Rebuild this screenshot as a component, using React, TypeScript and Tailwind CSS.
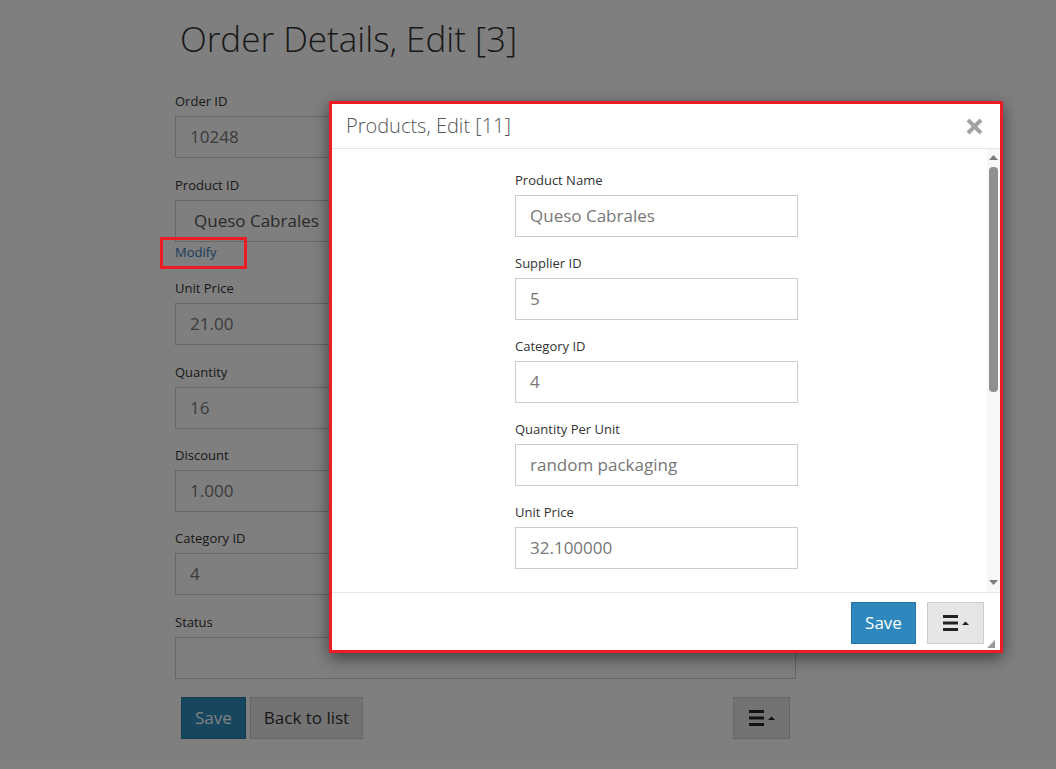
import React from "react";

const font = { fontFamily: '"Open Sans", "Liberation Sans", sans-serif' };

const MenuIcon = () => (
  <svg width="26" height="18" viewBox="0 0 26 18">
    <rect x="0" y="1" width="15" height="3" fill="#222" />
    <rect x="0" y="7.5" width="15" height="3" fill="#222" />
    <rect x="0" y="14" width="15" height="3" fill="#222" />
    <polygon points="19,11 26,11 22.5,7.5" fill="#222" />
  </svg>
);

const CloseIcon = () => (
  <svg width="17" height="17" viewBox="0 0 17 17">
    <line x1="2" y1="2" x2="15" y2="15" stroke="#a3a3a3" strokeWidth="4" />
    <line x1="15" y1="2" x2="2" y2="15" stroke="#a3a3a3" strokeWidth="4" />
  </svg>
);

type FieldProps = { label: string; value: string; gap?: string };

const Field = ({ label, value, gap = "mb-[17px]" }: FieldProps) => (
  <div className={gap}>
    <div className="text-[13px] leading-[20px] text-[#333] mb-[5px]">{label}</div>
    <div className="h-[42px] border border-[#ccc] bg-white px-[14px] flex items-center text-[17px] text-[#777]">
      {value}
    </div>
  </div>
);

const MenuButton = () => (
  <button className="w-[57px] h-[42px] bg-[#e6e6e6] border border-[#ccc] flex items-center justify-center">
    <MenuIcon />
  </button>
);

const OrderPage = () => (
  <div className="pl-[175px] w-[796px] pt-[19px]">
    <h1 className="pl-[5px] text-[35px] leading-[40px] font-light text-[#333] mb-[32px]">Order Details, Edit [3]</h1>

    <Field label="Order ID" value="10248" />

    <div>
      <div className="text-[13px] leading-[20px] text-[#333] mb-[5px]">Product ID</div>
      <div className="h-[42px] border border-[#ccc] bg-white px-[18px] flex items-center text-[17px] text-[#555]">
        Queso Cabrales
      </div>
      <a className="block text-[13px] leading-[20px] text-[#337ab7] mb-[16px]">Modify</a>
    </div>

    <Field label="Unit Price" value="21.00" />
    <Field label="Quantity" value="16" gap="mb-[16px]" />
    <Field label="Discount" value="1.000" gap="mb-[16px]" />
    <Field label="Category ID" value="4" />
    <Field label="Status" value="" gap="mb-[18px]" />

    <div className="flex items-center justify-between px-[6px]">
      <div className="flex gap-[4px]">
        <button className="h-[42px] px-[13px] bg-[#2e8cbe] border border-[#2a76a3] text-white text-[17px]">Save</button>
        <button className="h-[42px] px-[13px] bg-[#e6e6e6] border border-[#ccc] text-[#333] text-[17px]">Back to list</button>
      </div>
      <MenuButton />
    </div>
  </div>
);

const productFields = [
  { label: "Product Name", value: "Queso Cabrales" },
  { label: "Supplier ID", value: "5" },
  { label: "Category ID", value: "4" },
  { label: "Quantity Per Unit", value: "random packaging" },
  { label: "Unit Price", value: "32.100000" },
];

const ProductModal = () => (
  <div className="absolute left-[329px] top-[101px] w-[674px] h-[552px] border-[3px] border-[#ed1c24] bg-white flex flex-col shadow-[0_5px_15px_rgba(0,0,0,0.5)]">
    <div className="h-[45px] shrink-0 border-b border-[#e5e5e5] pl-[14px] pr-[17px] flex items-center justify-between">
      <span className="text-[20px] font-light text-[#555]">Products, Edit [11]</span>
      <CloseIcon />
    </div>

    <div className="flex-1 flex min-h-0">
      <div className="flex-1 overflow-hidden pt-[21px] pl-[183px]">
        <div className="w-[283px]">
          {productFields.map((f) => (
            <Field key={f.label} label={f.label} value={f.value} gap="mb-[16px]" />
          ))}
        </div>
      </div>
      <div className="w-[13px] bg-[#f8f8f8] flex flex-col items-center">
        <svg width="9" height="5" viewBox="0 0 9 5" className="mt-[6px]">
          <polygon points="0,5 9,5 4.5,0" fill="#7a7a7a" />
        </svg>
        <div className="mt-[7px] w-[9px] h-[225px] rounded-[4px] bg-[#909090]" />
        <div className="flex-1" />
        <svg width="9" height="5" viewBox="0 0 9 5" className="mb-[7px]">
          <polygon points="0,0 9,0 4.5,5" fill="#7a7a7a" />
        </svg>
      </div>
    </div>

    <div className="h-[58px] shrink-0 border-t border-[#e5e5e5] flex justify-end items-start pt-[9px] pr-[16px] gap-[11px] relative">
      <button className="h-[42px] w-[65px] bg-[#2e88bd] border border-[#2a73a3] text-white text-[17px]">Save</button>
      <MenuButton />
      <svg width="8" height="8" viewBox="0 0 8 8" className="absolute right-[5px] bottom-[2px]">
        <polygon points="8,0 8,8 0,8" fill="#999" />
      </svg>
    </div>
  </div>
);

export default function App() {
  return (
    <div className="relative w-[1056px] h-[769px] overflow-hidden bg-white" style={font}>
      <OrderPage />
      <div className="absolute inset-0 bg-black/50" />
      <div className="absolute left-[160px] top-[237px] w-[87px] h-[32px] border-[3px] border-[#ed1c24]" />
      <ProductModal />
    </div>
  );
}
